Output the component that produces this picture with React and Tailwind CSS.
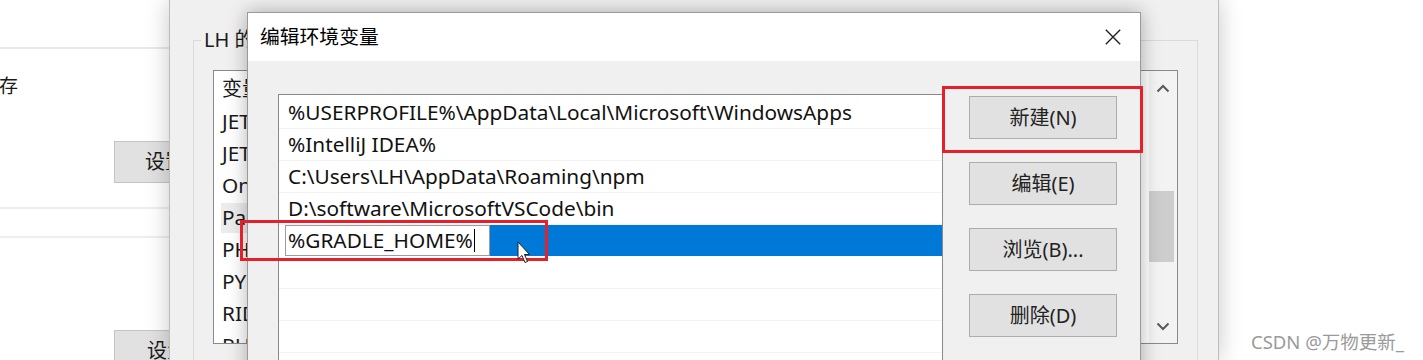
function Chevron({ up }) {
  return (
    <svg width="14" height="9" viewBox="0 0 14 9">
      <path d={up ? "M1.5 7.5 L7 2 L12.5 7.5" : "M1.5 1.5 L7 7 L12.5 1.5"} fill="none" stroke="#5a5a5a" strokeWidth="2" />
    </svg>
  );
}

export default function App() {
  const backRows = ["JET", "JET", "On", "Pa", "PH", "PY", "RID", "RU"];
  const paths = [
    "%USERPROFILE%\\AppData\\Local\\Microsoft\\WindowsApps",
    "%IntelliJ IDEA%",
    "C:\\Users\\LH\\AppData\\Roaming\\npm",
    "D:\\software\\MicrosoftVSCode\\bin",
  ];
  return (
    <div className="relative w-[1423px] h-[360px] overflow-hidden bg-white font-['Noto_Sans','Noto_Sans_CJK_SC',sans-serif] text-[#1a1a1a]">
      {/* back window */}
      <div className="absolute left-0 top-0 w-[169px] h-full bg-white flex flex-col overflow-hidden">
        <div className="h-[49px] shrink-0 border-b-2 border-[#e9e9e9]" />
        <div className="h-[158px] shrink-0 flex flex-col">
          <div className="mt-[24px] -ml-[1px] text-[19px] leading-[27px]">存</div>
          <div className="mt-[41px] ml-[114px] w-[110px] h-[42px] shrink-0 bg-[#e1e1e1] border border-[#c4c4c4] flex items-center pl-[30px] text-[20px] whitespace-nowrap">设置</div>
        </div>
        <div className="h-[31px] shrink-0 border-y-2 border-[#ededed]" />
        <div className="flex-1 flex flex-col">
          <div className="mt-[92px] ml-[114px] w-[110px] h-[42px] shrink-0 bg-[#e1e1e1] border border-[#c4c4c4] flex items-center pl-[32px] text-[20px] whitespace-nowrap">设置</div>
        </div>
      </div>

      {/* middle window */}
      <div className="absolute left-[169px] top-0 w-[1050px] h-full bg-[#f0f0f0] border-x border-[#bdbdbd] shadow-[0_0_22px_rgba(0,0,0,0.22)]">
        <div className="relative mt-[40px] ml-[23px] w-[1005px] h-[340px] border border-[#dadada]">
          <div className="absolute -top-[14px] left-[7px] w-[48px] overflow-hidden bg-[#f0f0f0] px-[3px] text-[20px] leading-[26px] whitespace-nowrap">LH 的</div>
          <div className="mt-[29px] ml-[19px] w-[965px] h-[274px] border border-[#8a8a8a] bg-white flex overflow-hidden">
            <div className="flex-1 flex flex-col overflow-hidden">
              <div className="w-[34px] flex flex-col overflow-hidden">
                <div className="h-[35px] shrink-0 flex items-center pl-[8px] text-[20px] whitespace-nowrap">变量</div>
                {backRows.map((r, i) => (
                  <div key={i} className="h-[32px] shrink-0 flex items-center pl-[7px] text-[20.8px] whitespace-nowrap">
                    <div className={"h-[30px] flex items-center pl-[1px] pr-[20px] " + (i === 3 ? "bg-[#ececec]" : "")}>{r}</div>
                  </div>
                ))}
              </div>
            </div>
            <div className="w-[28px] shrink-0 flex flex-col bg-[#f3f3f3]">
              <div className="h-[34px] shrink-0 flex items-center justify-center"><Chevron up /></div>
              <div className="h-[86px] shrink-0" />
              <div className="h-[71px] w-[25px] shrink-0 bg-[#cdcdcd]" />
              <div className="flex-1" />
              <div className="h-[34px] shrink-0 flex items-center justify-center"><Chevron /></div>
            </div>
          </div>
        </div>
      </div>

      {/* front dialog */}
      <div className="absolute left-[247px] top-[12px] w-[894px] h-[420px] border border-[#9a9a9a] bg-[#f0f0f0] shadow-[0_0_18px_rgba(0,0,0,0.3)] flex flex-col">
        <div className="h-[48px] shrink-0 bg-white flex items-center justify-between pl-[12px] pr-[19px]">
          <span className="text-[19.8px] leading-[26px] text-black">编辑环境变量</span>
          <svg width="16" height="16" viewBox="0 0 16 16">
            <path d="M0.8 0.8 L15.2 15.2 M15.2 0.8 L0.8 15.2" stroke="#222" strokeWidth="1.4" />
          </svg>
        </div>
        <div className="flex pt-[33px] pl-[30px]">
          <div className="w-[665px] h-[320px] shrink-0 border border-[#8a8a8a] bg-white pt-[2px] flex flex-col overflow-hidden">
            {paths.map((p, i) => (
              <div key={i} className="h-[32px] shrink-0 border-b border-[#f2f2f2] flex items-center pl-[9px] text-[20.8px] whitespace-nowrap text-[#111]">{p}</div>
            ))}
            <div className="h-[32px] shrink-0 flex">
              <div className="w-[6px] shrink-0" />
              <div className="w-[205px] shrink-0 h-[31px] border border-[#9c9c9c] bg-white flex items-center pl-[2px] text-[20.8px] whitespace-nowrap text-[#111]">
                %GRADLE_HOME%<span className="inline-block w-[1px] h-[23px] bg-black ml-[1px]" />
              </div>
              <div className="flex-1 h-[31px] bg-[#0078d7]" />
            </div>
            {[0, 1, 2, 3, 4].map((i) => (
              <div key={i} className="h-[32px] shrink-0 border-b border-[#f2f2f2]" />
            ))}
          </div>
          <div className="ml-[26px] pt-[2px] flex flex-col gap-[23px]">
            {["新建(N)", "编辑(E)", "浏览(B)...", "删除(D)"].map((b) => (
              <div key={b} className="w-[148px] h-[43px] bg-[#e1e1e1] border border-[#adadad] flex items-center justify-center text-[20px] text-[#222]">{b}</div>
            ))}
          </div>
        </div>
      </div>

      {/* annotations */}
      <div className="absolute left-[240px] top-[220px] w-[308px] h-[41px] border-[3px] border-[#e5202a]" />
      <div className="absolute left-[942px] top-[86px] w-[201px] h-[67px] border-[3px] border-[#e5202a]" />

      {/* mouse cursor */}
      <svg className="absolute left-[517px] top-[241px]" width="14" height="23" viewBox="0 0 14 23">
        <path d="M1 1 L1 18 L5 14.5 L8 21.5 L10.5 20.5 L7.5 13.5 L12.5 13.5 Z" fill="white" stroke="#222" strokeWidth="1" />
      </svg>

      {/* watermark */}
      <div className="absolute left-[1251px] top-[330px] text-[18.5px] leading-[24px] text-[#9a9a9a] whitespace-nowrap">CSDN @万物更新_</div>
    </div>
  );
}
